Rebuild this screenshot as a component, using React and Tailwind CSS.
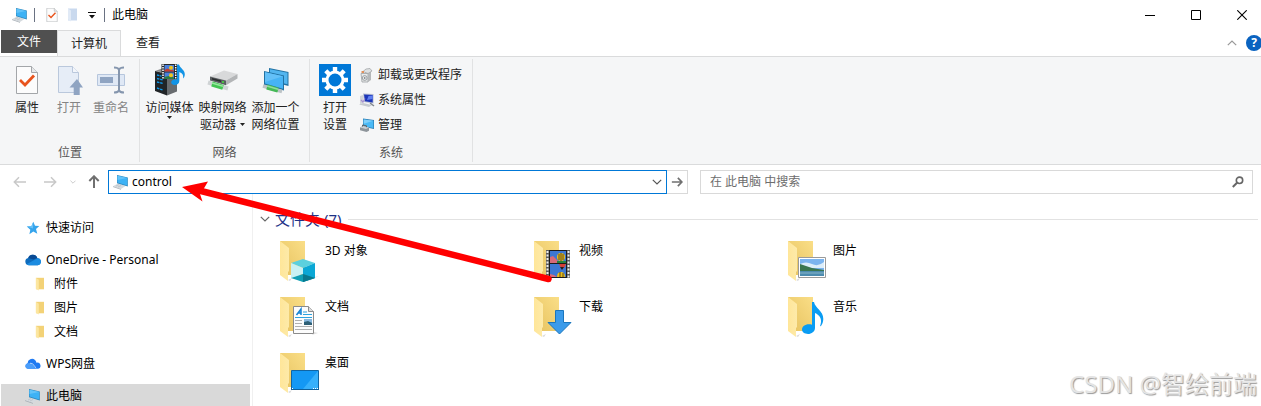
import React, { useState } from "react";

/* ---------- icons ---------- */

const PcIcon = () => (
  <svg width="16" height="16" viewBox="0 0 16 16" className="shrink-0">
    <path d="M0 12.200 5 9.500 12.500 12 8 15z" fill="#d5dade" />
    <path d="M0 12.200 8 15v.8L0 13z" fill="#a4acb3" />
    <path d="M3 12 6 10.500M5 13l3-1.500" stroke="#b5bcc2" strokeWidth=".7" />
    <path d="M4 1 14.800 3.400v9L4 9.200z" fill="#2f88bd" />
    <path d="M4.500 1.800 14.200 4v7.400L4.500 8.600z" fill="#3db2f5" />
    <path d="M4.500 1.800 14.200 4 4.500 6z" fill="#62c3f9" />
  </svg>
);

const DocCheckIcon = ({ className = "" }) => (
  <svg viewBox="0 0 22 28" className={className}>
    <path d="M.5.5h15l6 6v21H.5z" fill="#fcfcfc" stroke="#a3a6a9" />
    <path d="M15.500.5v6h6" fill="#e6e8ea" stroke="#a3a6a9" />
    <path d="m4 14 5 5 9-9.500" fill="none" stroke="#e8541d" strokeWidth="2.800" />
  </svg>
);

const SmallFolderIcon = () => (
  <svg width="11" height="14" viewBox="0 0 11 14">
    <path d="M1 .5h9v12H1z" fill="#c9d9ee" />
    <path d="M1 .5 4 2.500v11L1 11.500z" fill="#e1eaf6" />
  </svg>
);

const OpenIcon = () => (
  <svg width="28" height="32" viewBox="0 0 28 32">
    <path d="M3.500 2.500h14l6 6v20h-20z" fill="#e6edf7" stroke="#bac8dc" />
    <path d="M17.500 2.500v6h6" fill="#f3f6fb" stroke="#bac8dc" />
    <path d="m22 15 6 8.500h-3.300V31h-6v-7.500h-4.200z" fill="#8fa4c2" />
  </svg>
);

const RenameIcon = () => (
  <svg width="30" height="28" viewBox="0 0 30 28">
    <path d="M1.500 8.500h27v11h-27z" fill="#dfe8f5" stroke="#b6c6dd" />
    <path d="M4 11h13v6H4z" fill="#8fa4c2" />
    <path d="M18 1.500q4 0 5 2 1-2 5-2M23 3v21M18 26.500q4 0 5-2 1 2 5 2" fill="none" stroke="#8596ae" strokeWidth="2" />
  </svg>
);

const MediaIcon = () => (
  <svg width="32" height="32" viewBox="0 0 32 32">
    <path d="M1 7 8 4.500l15 3.500-5 2.500z" fill="#8a8c8e" />
    <path d="M1 7 13 10v21.500L1 27z" fill="#202427" />
    <path d="M13 10 23 8v19.500l-10 4z" fill="#686c6f" />
    <path d="m3 11 6 1.500M3 14.500 9 16M3 18l6 1.500M3 24l6 2" stroke="#0b9af0" strokeWidth="1.400" strokeDasharray="2.500 .8" />
    <path d="M7.500 0H23v15H7.500z" fill="#25282b" />
    <path d="M9 .5V15M21.700.5V15" stroke="#fff" strokeWidth="1.500" strokeDasharray="1.500 1" />
    <path d="M10.500 1H20v6.500h-9.500zM10.500 8.500H20V15h-9.500z" fill="#4a80dc" />
    <path d="m10.500 6 3-1.500 2 1 4.500 1v1h-9.500z" fill="#c63a2c" />
    <path d="m10.500 13 4-1 5.500 1.500V15h-9.500z" fill="#2b7b45" />
    <circle cx="17" cy="3.800" r="2" fill="#f0c51c" />
    <circle cx="17" cy="11.300" r="2" fill="#f0c51c" />
    <path d="M23 .5h2c1 4 6 5 5.800 10-.1 2-.8 3-1.800 4 .8-4-1-5.500-3.700-6.500V17c0 2.500-2.300 4-4.600 4s-3.700-1.200-3.500-2.900c.3-2.300 3.300-3.400 5.800-2.700z" fill="#1294e6" />
  </svg>
);

const DriveIcon = () => (
  <svg width="32" height="24" viewBox="0 0 32 24">
    <path d="m3 8.500 14-6 13.500 3.500L19 12.500z" fill="#d8d9da" />
    <path d="m3 8.500 16 4v4.800L3 12.500z" fill="#5b5f62" />
    <path d="M19 12.500 30.500 6v4.500L19 17.300z" fill="#b3b5b7" />
    <path d="m5 10.700 9 2.500" stroke="#2b2e30" strokeWidth="1.500" />
    <circle cx="16" cy="14" r="1" fill="#43e03c" />
    <path d="m1 14.500 20 6" stroke="#cfd3d5" strokeWidth="4" />
    <path d="m5 16 11 3.300" stroke="#43c553" strokeWidth="5" />
    <path d="m5 15 11 3.300" stroke="#97e69e" strokeWidth="1.500" />
  </svg>
);

const NetPlaceIcon = () => (
  <svg width="28" height="28" viewBox="0 0 28 28">
    <path d="M7 2 26.500 6v14L7 15z" fill="#2272a3" />
    <path d="m8 3.300 17.500 3.500v11.500L8 14z" fill="#52b5ef" />
    <path d="M2 5 22 9.500v15L2 19z" fill="#2272a3" />
    <path d="m3 6.300 18 4v12.400L3 17.500z" fill="#46b3f5" />
    <path d="m3 6.300 18 4L3 16z" fill="#63c0f8" />
    <path d="m1 20 19 5.500" stroke="#bcc3c6" strokeWidth="3.500" />
    <path d="m5 21 11 3.200" stroke="#45b957" strokeWidth="5" />
    <path d="m5 20 11 3.200" stroke="#92dd9c" strokeWidth="1.500" />
  </svg>
);

const SettingsIcon = () => (
  <svg width="32" height="32" viewBox="0 0 32 32">
    <path d="M0 0h32v32H0z" fill="#0078d7" />
    <circle cx="16" cy="16" r="8" fill="none" stroke="#fff" strokeWidth="3" />
    <g stroke="#fff" strokeWidth="4.400">
      <path d="M16 3v5M16 24v5M3 16h5M24 16h5" />
      <path d="m6.800 6.800 3.400 3.400M21.800 21.800l3.400 3.400M25.200 6.800l-3.400 3.400M10.200 21.800l-3.400 3.400" />
    </g>
  </svg>
);

const UninstallIcon = () => (
  <svg width="16" height="16" viewBox="0 0 16 16">
    <path d="M2 6.500h7V15H3z" fill="#e9ebec" stroke="#9b9fa2" strokeWidth=".8" />
    <path d="m9 6.500 3-2V13l-3 2z" fill="#b5b8ba" />
    <path d="m4 4.500 3-2.500 4-.5L13 4 9 6.500z" fill="#dfe1e2" stroke="#9a9ea1" strokeWidth=".7" />
    <circle cx="5.700" cy="11" r="2.400" fill="#e4e8ea" stroke="#8c9094" strokeWidth=".8" />
    <circle cx="5.700" cy="11" r=".8" fill="#5a5d60" />
    <path d="M2.500 4h2.500v2H2.500z" fill="#e0905c" />
  </svg>
);

const SystemIcon = () => (
  <svg width="16" height="16" viewBox="0 0 16 16">
    <path d="m1 4 3-1v8l-3 1z" fill="#d0d3d8" />
    <path d="M0 12.500 4 11l9 2-3 2z" fill="#c6cbd0" />
    <path d="M4 1.500 14.500 2v9.500L5 10z" fill="#b6bcd0" />
    <path d="m5 2.500 8.700.4v7.600L6 9.200z" fill="#1c36b8" />
    <path d="m8 8 1.500-4 4.200-.4V7z" fill="#5f7ff0" />
    <path d="m2 8 2 2 2-3.500" fill="none" stroke="#a48fd0" strokeWidth="1.200" />
    <path d="m11 11 4 3" stroke="#82878c" strokeWidth="1.500" />
  </svg>
);

const ManageIcon = () => (
  <svg width="16" height="16" viewBox="0 0 16 16">
    <path d="M4 1.500 15 3v9L4 9.800z" fill="#2b7fb6" />
    <path d="m4.700 2.400 9.600 1.300v7.300l-9.600-1.800z" fill="#49b9f6" />
    <path d="m4.700 2.400 9.600 1.300-9.600 3z" fill="#7fd0fb" />
    <path d="M1 10.500 4 9l6 1.500v3.300L7.500 15 1 13.200z" fill="#8e959b" />
    <path d="m1 10.500 3-1.500 6 1.500-3 1.500z" fill="#cbd0d4" />
    <path d="M3.500 9.500V8l4 .8v1.400" fill="none" stroke="#5d6469" />
  </svg>
);

const StarIcon = () => (
  <svg width="14" height="14" viewBox="0 0 14 14">
    <path d="m7.300.8 1.700 4 4.300.2-3.300 3 1.300 4.700-4-2.200-3.900 2.700.9-4.500L.8 5.500 5.500 5z" fill="#35a4ec" />
    <path d="M7.300.8 7 7.500.8 5.500 5.500 5z" fill="#6bc1f6" />
  </svg>
);

const OneDriveIcon = () => (
  <svg width="16" height="12" viewBox="0 0 16 12">
    <path d="M3.800 11.200a3.700 3.700 0 0 1-.6-7.300A4.900 4.900 0 0 1 12.300 4a3.700 3.700 0 0 1 .5 7.200z" fill="#0f6cbd" />
    <path d="M3.200 3.900A4.900 4.900 0 0 1 12.300 4c-1.500.3-2.800 1-3.800 1.600z" fill="#0a4a94" />
    <path d="M1.500 10.300 12.500 4.200a3.500 3.500 0 0 1 .3 7h-9q-1.300 0-2.300-.9z" fill="#1c8be0" />
  </svg>
);

const WpsIcon = () => (
  <svg width="16" height="12" viewBox="0 0 16 12">
    <path d="M2.800 10.800a2.800 2.800 0 0 1-.2-5.500A4.400 4.400 0 0 1 10 2c1 1 1.300 1.800 1.400 2.700a3.100 3.100 0 0 1 1.800 6.100z" fill="#1f7af2" />
    <path d="M2.600 5.300Q6 4 8.200 7l2.500 3.800H2.800a2.800 2.800 0 0 1-.2-5.500z" fill="#4a9dfa" />
    <path d="M5 5.200Q7.500 5 9 7.200l2 3" fill="none" stroke="#fff" strokeWidth=".6" />
  </svg>
);

const TinyFolderIcon = () => (
  <svg width="10" height="14" viewBox="0 0 10 14">
    <path d="M1 .8h8v11.500H1z" fill="#f3d277" />
    <path d="m.8.8 3 2v10.700l-3-1.700z" fill="#fce6a0" />
  </svg>
);

/* Big folder with an overlay drawn in the lower right corner */
const FolderIcon = ({ children }) => (
  <svg width="40" height="42" viewBox="0 0 40 42" className="shrink-0">
    <defs>
      <linearGradient id="folderBack" x1="0" x2="1" y1="1" y2="0">
        <stop offset="0" stopColor="#e6c25f" />
        <stop offset="1" stopColor="#fade87" />
      </linearGradient>
      <linearGradient id="folderFront" x1="0" x2="1">
        <stop offset="0" stopColor="#ffe699" />
        <stop offset="1" stopColor="#fdeaa9" />
      </linearGradient>
    </defs>
    <path d="m8 40 4-2-2 3z" fill="#dadada" />
    <path d="M0 1h25v34H0z" fill="url(#folderBack)" />
    <path d="m0 1 9 7v23l-1 1v9l-8-6z" fill="url(#folderFront)" />
    {children}
  </svg>
);

const overlays = {
  objects: (
    <>
      <path d="m34 37 5-1-12 6z" fill="#e9e9e9" />
      <path d="m11 23 12-4 12 4-12 5z" fill="#5bd0de" />
      <path d="M23 28 35 23v15l-12 4z" fill="#0aa7d5" />
      <path d="M11 23l12 5v6l-12 4z" fill="#c8f1f3" />
      <path d="m11 38 12-4 12 4-12 4z" fill="#109fb4" />
      <path d="m23 34 12 4-12 4z" fill="#08788e" />
    </>
  ),
  video: (
    <>
      <path d="M12 10h24v28H12z" fill="#5c5c5c" />
      <path d="M13.500 11v27M34.500 11v27" stroke="#eee" strokeWidth="2" strokeDasharray="2 1.500" />
      <path d="M15 10h18v28H15z" fill="#1c1c1c" />
      <path d="M16 11h16v12H16zM16 24h16v13H16z" fill="#3d77d2" />
      <path d="m16 17 3-1 3 3 2 2v2h-8zM16 34l4 1 3 2h-7z" fill="#d86a78" />
      <path d="M23 21h9v2h-9z" fill="#27803c" />
      <circle cx="27" cy="17" r="4" fill="#eabf19" />
      <path d="M27 13v8M25 14v6M29 14v6" stroke="#3b281e" strokeWidth=".8" />
      <path d="M25 24h7l-2 4h-3z" fill="#d54035" />
      <path d="M26 27h4l-2 3z" fill="#211c1a" />
      <path d="M23 37q0-5 4-5t4 5z" fill="#eabf19" />
      <path d="M26 32v5M29 33v4" stroke="#3b281e" strokeWidth=".8" />
    </>
  ),
  picture: (
    <>
      <path d="M10.500 17.500h27v20h-27z" fill="#fff" stroke="#9a9a9a" />
      <path d="M12 19h24v17H12z" fill="#7bb4ef" />
      <path d="M12 24q6-3 12 0t12-2v6H12z" fill="#dcedf9" />
      <path d="m12 24 6 2 6 2 12 2v1H12z" fill="#3a7650" />
      <path d="M12 31h24v5H12z" fill="#4d8caf" />
      <path d="M12 33h24" stroke="#87b4c9" />
    </>
  ),
  document: (
    <>
      <path d="m34 36 4 1-6 2z" fill="#e0e0e0" />
      <path d="M13.500 10.500h15l5 5v22h-20z" fill="#fcfcfc" stroke="#8b8b8b" />
      <path d="M28.500 10.500v5h5" fill="#ddd" stroke="#8b8b8b" />
      <path d="m16.500 19 4.500-6v6M18 17h3" fill="none" stroke="#1784d5" strokeWidth="1.500" />
      <path d="M23 16h4M23 18.500h9M15 21.500h17" stroke="#2da3e0" />
      <path d="M15 24.500h7M15 27.500h7M15 30.500h17M15 33.500h17" stroke="#b0b0b0" />
      <path d="M24 23h8v6h-8z" fill="#87b7de" />
      <path d="m24 26 4-1 4 2v2h-8z" fill="#2e5f75" />
    </>
  ),
  download: (
    <path d="M21.500 14.500h8v12H37L25.500 38 14 26.500h7.500z" fill="#3b9bea" stroke="#1b76bd" />
  ),
  music: (
    <path d="M24 6h2c1 6 9.500 9 9.300 17-.1 3-1 5-2.300 7-1 .6-1-.2-.6-1C34.500 23 31.500 19 27 17v15c0 3.500-3.500 6-7 6s-6-1.800-6-4.400c0-3.600 4.500-6.400 10-4.800z" fill="#0a9cf3" />
  ),
  desktop: (
    <>
      <path d="M11.500 18.500h27v19h-27z" fill="#1498f4" stroke="#1165a3" />
      <path d="m38 19-15 18h15z" fill="#37b0fb" />
      <path d="M11 37.500h28" stroke="#0e609d" />
      <path d="M12 36.500h1M33 36.500h5" stroke="#fff" strokeDasharray="1 1" />
    </>
  ),
};

const Chevron = ({ className }) => (
  <svg width="10" height="6" viewBox="0 0 10 6" className={className}>
    <path d="m.8.8 4.200 4.200L9.200.8" fill="none" stroke="currentColor" strokeWidth="1.200" />
  </svg>
);

const ArrowGlyph = ({ className = "", weight = 1.5 }) => (
  <svg width="14" height="12" viewBox="0 0 14 12" className={className}>
    <path d="M13 6H1.500M6 1.300 1.300 6 6 10.700" fill="none" stroke="currentColor" strokeWidth={weight} />
  </svg>
);

const Caret = () => (
  <svg width="5" height="3" viewBox="0 0 5 3" className="inline-block">
    <path d="M0 0h5L2.500 3z" fill="#222" />
  </svg>
);

/* ---------- data ---------- */

const sidebarItems = [
  { label: "快速访问", icon: <StarIcon /> },
  { label: "OneDrive - Personal", icon: <OneDriveIcon />, gap: true },
  { label: "附件", icon: <TinyFolderIcon />, child: true },
  { label: "图片", icon: <TinyFolderIcon />, child: true },
  { label: "文档", icon: <TinyFolderIcon />, child: true },
  { label: "WPS网盘", icon: <WpsIcon />, gap: true },
  { label: "此电脑", icon: <PcIcon />, gap: true, active: true },
];

const folders = [
  { label: "3D 对象", overlay: "objects" },
  { label: "视频", overlay: "video" },
  { label: "图片", overlay: "picture" },
  { label: "文档", overlay: "document" },
  { label: "下载", overlay: "download" },
  { label: "音乐", overlay: "music" },
  { label: "桌面", overlay: "desktop" },
];

/* ---------- parts ---------- */

const TitleBar = () => (
  <header className="flex h-[30px] shrink-0 items-center justify-between overflow-hidden">
    <div className="flex items-center pl-3">
      <PcIcon />
      <span className="ml-1.5 h-3.5 w-px bg-gray-500" />
      <button type="button" aria-label="属性" className="ml-[11px]">
        <DocCheckIcon className="h-3.5 w-3" />
      </button>
      <button type="button" aria-label="新建文件夹" className="ml-[9px]">
        <SmallFolderIcon />
      </button>
      <button type="button" aria-label="自定义快速访问工具栏" className="ml-2.5">
        <svg width="8" height="7" viewBox="0 0 8 7">
          <path d="M0 .5h8" stroke="#111" />
          <path d="M1 3h6L4 6.500z" fill="#111" />
        </svg>
      </button>
      <span className="ml-2 h-3.5 w-px bg-gray-500" />
      <h1 className="ml-[7px]">此电脑</h1>
    </div>
    <div className="-mr-1 flex h-7">
      <button type="button" aria-label="最小化" className="flex w-[46px] items-center justify-center">
        <svg width="10" height="10" viewBox="0 0 10 10">
          <path d="M0 5.500h10" stroke="#000" />
        </svg>
      </button>
      <button type="button" aria-label="最大化" className="flex w-[46px] items-center justify-center">
        <svg width="10" height="10" viewBox="0 0 10 10">
          <path d="M.5.5h9v9h-9z" fill="none" stroke="#000" />
        </svg>
      </button>
      <button type="button" aria-label="关闭" className="flex w-[46px] items-center justify-center">
        <svg width="10" height="10" viewBox="0 0 10 10">
          <path d="m.3.3 9.400 9.400m0-9.400L.3 9.700" stroke="#000" strokeWidth="1.100" />
        </svg>
      </button>
    </div>
  </header>
);

const TabBar = () => (
  <div className="flex h-[27px] shrink-0 items-stretch overflow-hidden border-b border-[#dadbdc] pl-px">
    <button type="button" className="mb-[3px] w-14 bg-[#505050] text-white">
      文件
    </button>
    <button
      type="button"
      className="-mb-px w-16 border border-b-0 border-[#dadbdc] bg-[#f5f6f7] text-[#222]"
    >
      计算机
    </button>
    <button type="button" className="w-[54px] text-[#222]">
      查看
    </button>
    <div className="-mr-px ml-auto flex items-center gap-[9px]">
      <button type="button" aria-label="最小化功能区" className="text-[#999]">
        <Chevron className="rotate-180" />
      </button>
      <button
        type="button"
        aria-label="帮助"
        className="flex h-4 w-4 items-center justify-center rounded-full bg-[#0a63c0] text-xs font-bold text-white"
      >
        ?
      </button>
    </div>
  </div>
);

const RibbonButton = ({ icon, lines, disabled, width = "w-[42px]", caret }) => (
  <button
    type="button"
    disabled={disabled}
    className={`flex flex-col items-center pt-[3px] leading-[17px] whitespace-nowrap ${width} ${
      disabled ? "text-[#848484]" : "text-[#222]"
    }`}
  >
    <span className="mb-px flex h-9 items-center">{icon}</span>
    {lines.map((line, i) => (
      <span key={line} className={caret === "inline" && i === 1 ? "flex items-center gap-1" : ""}>
        {line}
        {caret === "inline" && i === 1 && <Caret />}
      </span>
    ))}
    {caret === "below" && (
      <span className="flex h-1">
        <Caret />
      </span>
    )}
  </button>
);

const RibbonGroup = ({ label, className, children }) => (
  <section aria-label={label} className="flex flex-col border-r border-[#e1e2e3]">
    <div className={`flex h-[84px] items-start ${className}`}>{children}</div>
    <div className="pt-px text-center leading-[18px] text-[#555]">{label}</div>
  </section>
);

const RibbonRow = ({ icon, children }) => (
  <button type="button" className="flex h-[25px] items-center gap-[3px] whitespace-nowrap text-[#222]">
    {icon}
    {children}
  </button>
);

const Ribbon = () => (
  <div className="flex shrink-0 border-b border-[#dadbdc] bg-[#f5f6f7] py-0.5 pl-px">
    <RibbonGroup label="位置" className="pr-[7px] pl-[5px]">
      <RibbonButton icon={<DocCheckIcon className="h-7 w-[22px]" />} lines={["属性"]} />
      <RibbonButton icon={<OpenIcon />} lines={["打开"]} disabled />
      <RibbonButton icon={<RenameIcon />} lines={["重命名"]} disabled />
    </RibbonGroup>
    <RibbonGroup label="网络" className="pr-[7px] pl-[3px]">
      <RibbonButton icon={<MediaIcon />} lines={["访问媒体"]} width="w-[53px]" caret="below" />
      <RibbonButton icon={<DriveIcon />} lines={["映射网络", "驱动器"]} width="w-[53px]" caret="inline" />
      <RibbonButton icon={<NetPlaceIcon />} lines={["添加一个", "网络位置"]} width="w-[53px]" />
    </RibbonGroup>
    <RibbonGroup label="系统" className="pr-2.5 pl-1">
      <RibbonButton icon={<SettingsIcon />} lines={["打开", "设置"]} />
      <div className="ml-[3px] flex flex-col pt-[3px]">
        <RibbonRow icon={<UninstallIcon />}>卸载或更改程序</RibbonRow>
        <RibbonRow icon={<SystemIcon />}>系统属性</RibbonRow>
        <RibbonRow icon={<ManageIcon />}>管理</RibbonRow>
      </div>
    </RibbonGroup>
  </div>
);

const AddressBar = () => {
  const [path, setPath] = useState("control");
  const [query, setQuery] = useState("");

  return (
    <div className="flex shrink-0 items-center pt-[5px] pr-2 pl-[13px]">
      <button type="button" aria-label="后退" className="text-[#c8c8c8]">
        <ArrowGlyph />
      </button>
      <button type="button" aria-label="前进" className="ml-4 text-[#c8c8c8]">
        <ArrowGlyph className="rotate-180" />
      </button>
      <button type="button" aria-label="最近浏览的位置" className="ml-[13px] text-[#b8b8b8]">
        <Chevron className="w-1.5" />
      </button>
      <button type="button" aria-label="上移" className="mr-[7px] ml-[11px] text-[#707070]">
        <ArrowGlyph className="rotate-90" weight={2} />
      </button>
      <div className="flex h-6 min-w-0 flex-[549] items-center border border-[#0078d7] px-1">
        <PcIcon />
        <input
          aria-label="地址"
          value={path}
          onChange={(e) => setPath(e.target.value)}
          className="ml-[3px] min-w-0 flex-1 text-black outline-none"
        />
        <button type="button" aria-label="历史记录" className="text-[#555]">
          <Chevron />
        </button>
      </div>
      <button
        type="button"
        aria-label="转到"
        className="flex h-6 w-[21px] items-center justify-center border border-l-0 border-[#d9d9d9] text-[#707070]"
      >
        <ArrowGlyph className="w-3 rotate-180" weight={2} />
      </button>
      <div className="ml-3 flex h-6 min-w-0 flex-[534] items-center border border-[#d9d9d9] pr-2 pl-[9px]">
        <input
          aria-label="搜索"
          type="text"
          value={query}
          onChange={(e) => setQuery(e.target.value)}
          placeholder="在 此电脑 中搜索"
          className="min-w-0 flex-1 outline-none placeholder:text-[#6d6d6d]"
        />
        <svg width="12" height="12" viewBox="0 0 12 12">
          <circle cx="7.500" cy="4.300" r="3.200" fill="none" stroke="#666" strokeWidth="1.600" />
          <path d="M5 6.800.8 11" stroke="#666" strokeWidth="2" />
        </svg>
      </div>
    </div>
  );
};

const Sidebar = () => (
  <nav className="w-[253px] shrink-0 overflow-hidden border-r border-[#f0f0f0] pt-[22px] pr-0.5 pl-px">
    {sidebarItems.map((item) => (
      <a
        key={item.label}
        href="#"
        className={`flex h-6 items-center text-black ${item.gap ? "mt-2" : ""} ${
          item.active ? "bg-[#d9d9d9]" : ""
        } ${item.child ? "gap-1.5 pl-[31px]" : "gap-[5px] pl-6"}`}
      >
        <span className="flex w-4 justify-center">{item.icon}</span>
        {item.label}
      </a>
    ))}
  </nav>
);

const FolderList = () => (
  <main className="min-w-0 flex-1 overflow-hidden pt-[13px] pr-[3px] pl-[7px]">
    <div className="flex h-6 items-center">
      <button type="button" aria-label="折叠" className="text-[#666]">
        <Chevron />
      </button>
      <h2 className="ml-[5px] text-[15px] leading-5 text-[#1e3287]">文件夹 (7)</h2>
      <span className="ml-[7px] h-px flex-1 bg-[#e2e2e2]" />
    </div>
    <div className="mt-[9px] grid grid-cols-[repeat(auto-fill,254px)] pr-[200px] pl-5">
      {folders.map((folder) => (
        <a key={folder.label} href="#" className="flex h-14 items-start gap-[5px] text-black">
          <FolderIcon>{overlays[folder.overlay]}</FolderIcon>
          <span className="pt-0.5 leading-[18px]">{folder.label}</span>
        </a>
      ))}
    </div>
  </main>
);

/* Red pointer towards the address box */
const PointerArrow = () => (
  <svg
    width="372"
    height="104"
    viewBox="0 0 372 104"
    className="pointer-events-none absolute top-[180px] left-[181px]"
  >
    <path d="M18 10.500 367.500 99" stroke="#f00" strokeWidth="6.500" strokeLinecap="round" />
    <path d="M1 7 27 1.500 22 10l-3 4 2.500 7.500z" fill="#f00" />
  </svg>
);

const App = () => {
  return (
    <div className="relative flex h-screen flex-col overflow-hidden bg-white font-['Noto_Sans','Noto_Sans_CJK_SC',sans-serif] text-xs text-black">
      <TitleBar />
      <TabBar />
      <Ribbon />
      <AddressBar />
      <div className="flex min-h-0 flex-1">
        <Sidebar />
        <FolderList />
      </div>
      <PointerArrow />
      <div className="pointer-events-none absolute right-1 bottom-1.5 text-2xl text-[#e4e4e4] [text-shadow:1px_1px_1px_#999]">
        CSDN @智绘前端
      </div>
    </div>
  );
};

export default App;
